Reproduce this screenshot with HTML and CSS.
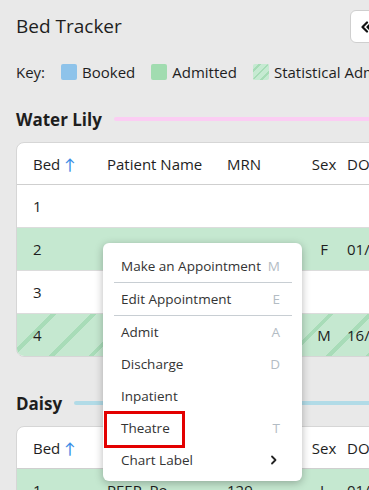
FILE: index.html
```html
<!DOCTYPE html>
<html lang="en">
<head>
<meta charset="UTF-8">
<meta name="viewport" content="width=device-width, initial-scale=1.0">
<title>Bed Tracker</title>
<link rel="stylesheet" href="styles.css">
</head>
<body>
<div class="page">
    <div class="topbar">
        <h1>Bed Tracker</h1>
        <button class="collapse-btn" type="button">
            <svg width="14" height="14" viewBox="0 0 14 14"><path d="M7 2.5 2.5 7 7 11.5M12 2.5 7.5 7 12 11.5" fill="none" stroke="#111" stroke-width="2.2" stroke-linecap="round" stroke-linejoin="round"/></svg>
        </button>
    </div>

    <div class="key">
        <span class="key-label">Key:</span>
        <span class="key-item"><span class="swatch booked"></span>Booked</span>
        <span class="key-item"><span class="swatch admitted"></span>Admitted</span>
        <span class="key-item"><span class="swatch statistical"></span>Statistical Admission</span>
    </div>

    <div class="ward">
        <div class="ward-title"><h2>Water Lily</h2><span class="ward-line pink"></span></div>
        <div class="card">
            <table>
                <colgroup><col class="c-bed"><col class="c-name"><col class="c-mrn"><col class="c-sex"><col class="c-dob"></colgroup>
                <thead>
                    <tr><th>Bed <span class="sort">↑</span></th><th>Patient Name</th><th>MRN</th><th class="sex">Sex</th><th class="dob">DOB</th></tr>
                </thead>
                <tbody>
                    <tr><td>1</td><td></td><td></td><td class="sex"></td><td class="dob"></td></tr>
                    <tr class="admitted"><td>2</td><td></td><td></td><td class="sex">F</td><td class="dob">01/04/1961</td></tr>
                    <tr><td>3</td><td></td><td></td><td class="sex"></td><td class="dob"></td></tr>
                    <tr class="statistical"><td>4</td><td></td><td></td><td class="sex">M</td><td class="dob">16/08/1975</td></tr>
                </tbody>
            </table>
        </div>
    </div>

    <div class="ward second">
        <div class="ward-title"><h2>Daisy</h2><span class="ward-line blue"></span></div>
        <div class="card">
            <table>
                <colgroup><col class="c-bed"><col class="c-name"><col class="c-mrn"><col class="c-sex"><col class="c-dob"></colgroup>
                <thead>
                    <tr><th>Bed <span class="sort">↑</span></th><th>Patient Name</th><th>MRN</th><th class="sex">Sex</th><th class="dob">DOB</th></tr>
                </thead>
                <tbody>
                    <tr class="admitted"><td>1</td><td>PEEP, Po</td><td>129</td><td class="sex">L</td><td class="dob">01/01/1990</td></tr>
                </tbody>
            </table>
        </div>
    </div>

    <div class="menu">
        <div class="menu-item">Make an Appointment<span class="shortcut">M</span></div>
        <div class="menu-sep"></div>
        <div class="menu-item">Edit Appointment<span class="shortcut">E</span></div>
        <div class="menu-sep"></div>
        <div class="menu-item">Admit<span class="shortcut">A</span></div>
        <div class="menu-item">Discharge<span class="shortcut">D</span></div>
        <div class="menu-item">Inpatient</div>
        <div class="menu-item">Theatre<span class="shortcut">T</span></div>
        <div class="menu-item">Chart Label<span class="shortcut arrow">
            <svg width="8" height="10" viewBox="0 0 8 10"><path d="M2 1.5 5.5 5 2 8.5" fill="none" stroke="#222" stroke-width="1.8" stroke-linecap="round" stroke-linejoin="round"/></svg>
        </span></div>
        <div class="highlight"></div>
    </div>
</div>
</body>
</html>
```

FILE: styles.css
```css
body { margin: 0; background: #e9e9e9; font-family: "Open Sans", "Lato", sans-serif; color: #1e1e1e; overflow: hidden; }
.page { position: relative; padding: 0 0 0 16px; width: 700px; }

.topbar { display: flex; align-items: center; height: 52px; }
h1 { margin: 0; font-size: 19px; font-weight: 500; width: 334px; }
.collapse-btn { width: 40px; height: 33px; background: #fff; border: 1px solid #cfcfcf; border-radius: 6px; padding: 0 0 0 9px; text-align: left; margin-top: 1px; }
.collapse-btn svg { display: block; }

.key { display: flex; align-items: center; height: 40px; font-size: 15px; }
.key-label { margin-right: 16px; }
.key-item { display: flex; align-items: center; margin-right: 16px; }
.swatch { width: 16px; height: 16px; border-radius: 2px; margin-right: 5px; }
.swatch.booked { background: #8ec3ea; }
.swatch.admitted { background: #a1dcb0; }
.swatch.statistical { background: repeating-linear-gradient(135deg, #c6ead2 0 4px, #a6dcb6 4px 6px); }

.ward { margin-top: 12px; }
.ward.second { margin-top: 31px; }
.ward-title { display: flex; align-items: center; height: 30px; }
h2 { margin: 0 12px 0 0; font-size: 17px; font-weight: 700; }
.ward-line { flex: 1; height: 4px; border-radius: 2px; }
.ward-line.pink { background: #fbcdf3; }
.ward-line.blue { background: #b1dbe7; }

.card { margin-top: 8px; background: #fff; border: 1px solid #d6d6d6; border-radius: 8px; overflow: hidden; }
table { border-collapse: collapse; table-layout: fixed; width: 684px; font-size: 15px; }
.c-bed { width: 74px; }
.c-name { width: 120px; }
.c-mrn { width: 84px; }
.c-sex { width: 52px; }
th, td { padding: 0 0 0 16px; text-align: left; white-space: nowrap; overflow: hidden; }
th { height: 41px; font-weight: 500; border-bottom: 1px solid #cfcfcf; }
td { height: 42px; border-top: 1px solid #dcdcdc; }
tbody tr:first-child td { border-top: none; }
th.sex, td.sex { padding: 0 10px 0 16px; text-align: center; }
th.dob, td.dob { padding-left: 0; }
.sort { color: #3b8ee6; }
tr.admitted td { background: #c5e8d0; }
tr.statistical { background: repeating-linear-gradient(135deg, #c5e8d0 0 24px, #a8dcb8 24px 28px); }

.menu { position: absolute; left: 103px; top: 243px; width: 199px; padding: 7px 0 5px; background: #fff; border-radius: 6px; box-shadow: 0 2px 8px rgba(0, 0, 0, .28); font-size: 13.5px; }
.menu-item { display: flex; justify-content: space-between; align-items: center; height: 32px; padding: 0 22px 0 18px; color: #333; }
.shortcut { color: #b3bcc4; }
.shortcut.arrow { display: flex; padding-right: 2px; }
.menu-sep { height: 1px; margin: 0 10px 0 11px; background: #c8ced3; }
.highlight { position: absolute; left: 1px; top: 168px; width: 75px; height: 31px; border: 3px solid #e30000; }
```
